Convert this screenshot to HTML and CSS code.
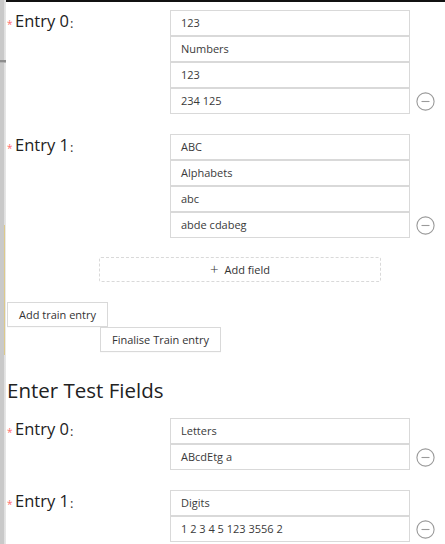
FILE: index.html
```html
<!DOCTYPE html>
<html>
<head>
<meta charset="utf-8">
<link rel="stylesheet" href="styles.css">
</head>
<body>
<div class="frame">
  <div class="side">
    <div class="s-top"></div>
    <div class="s-rule"></div>
    <div class="s-mid"></div>
    <div class="s-accent"></div>
    <div class="s-rest"></div>
  </div>
  <div class="main">
    <div class="list train">
      <div class="entry">
        <div class="label"><span class="req">*</span><span class="ltext">Entry 0</span><span class="colon">:</span></div>
        <div class="inputs">
          <div class="input">123</div>
          <div class="input">Numbers</div>
          <div class="input">123</div>
          <div class="input">234 125</div>
        </div>
        <div class="remove"><svg width="19" height="19" viewBox="0 0 19 19"><circle cx="9.5" cy="9.5" r="8.6" fill="none" stroke="#9a9a9a" stroke-width="1.1"/><line x1="5.5" y1="9.5" x2="13.5" y2="9.5" stroke="#9a9a9a" stroke-width="1.1"/></svg></div>
      </div>
      <div class="entry">
        <div class="label"><span class="req">*</span><span class="ltext">Entry 1</span><span class="colon">:</span></div>
        <div class="inputs">
          <div class="input">ABC</div>
          <div class="input">Alphabets</div>
          <div class="input">abc</div>
          <div class="input">abde cdabeg</div>
        </div>
        <div class="remove"><svg width="19" height="19" viewBox="0 0 19 19"><circle cx="9.5" cy="9.5" r="8.6" fill="none" stroke="#9a9a9a" stroke-width="1.1"/><line x1="5.5" y1="9.5" x2="13.5" y2="9.5" stroke="#9a9a9a" stroke-width="1.1"/></svg></div>
      </div>
    </div>
    <div class="add-field"><span class="plus">+</span><span>Add field</span></div>
    <div class="actions">
      <div class="btn">Add train entry</div>
      <div class="btn btn-final">Finalise Train entry</div>
    </div>
    <h2 class="heading">Enter Test Fields</h2>
    <div class="list test">
      <div class="entry">
        <div class="label"><span class="req">*</span><span class="ltext">Entry 0</span><span class="colon">:</span></div>
        <div class="inputs">
          <div class="input">Letters</div>
          <div class="input">ABcdEtg a</div>
        </div>
        <div class="remove"><svg width="19" height="19" viewBox="0 0 19 19"><circle cx="9.5" cy="9.5" r="8.6" fill="none" stroke="#9a9a9a" stroke-width="1.1"/><line x1="5.5" y1="9.5" x2="13.5" y2="9.5" stroke="#9a9a9a" stroke-width="1.1"/></svg></div>
      </div>
      <div class="entry">
        <div class="label"><span class="req">*</span><span class="ltext">Entry 1</span><span class="colon">:</span></div>
        <div class="inputs">
          <div class="input">Digits</div>
          <div class="input">1 2 3 4 5 123 3556 2</div>
        </div>
        <div class="remove"><svg width="19" height="19" viewBox="0 0 19 19"><circle cx="9.5" cy="9.5" r="8.6" fill="none" stroke="#9a9a9a" stroke-width="1.1"/><line x1="5.5" y1="9.5" x2="13.5" y2="9.5" stroke="#9a9a9a" stroke-width="1.1"/></svg></div>
      </div>
    </div>
  </div>
</div>
</body>
</html>
```

FILE: styles.css
```css
* { box-sizing: border-box; }
html, body { margin: 0; padding: 0; background: #fff; }
body { font-family: "Open Sans", "Noto Sans", sans-serif; color: #262626; }

.frame { display: flex; width: 445px; height: 544px; overflow: hidden; }

.side { width: 6px; display: flex; flex-direction: column; flex: none; }
.side > div { flex-shrink: 0; background: linear-gradient(to right, #c9c9c9 0, #c9c9c9 4px, #dedede 4px, #e8e8e8 6px); }
.s-top { height: 60px; }
.side > .s-rule { height: 3px; background: linear-gradient(to bottom, #8d8d8d 0, #8d8d8d 2px, #b5b5b5 2px); }
.s-mid { height: 162px; }
.side > .s-accent { height: 130px; background: linear-gradient(to right, #c9c9c9 0, #c9c9c9 4px, #dcc98a 4px, #dcc98a 5px, #e8e8e8 5px); }
.side > .s-rest { flex: 1 0 auto; }

.main { flex: 1; border-top: 2px solid #111; padding-left: 1px; display: flex; flex-direction: column; }
.main > * { flex-shrink: 0; }

.list.train { padding-top: 8px; }
.list.test { margin-top: 14px; }

.entry { display: flex; align-items: flex-start; margin-bottom: 20px; }
.label { width: 163px; height: 22px; display: flex; align-items: center; flex: none; }
.req { color: #ff6b6e; font-size: 10px; width: 8px; line-height: 1; margin-top: 5px; }
.ltext { font-size: 16.5px; color: #222; line-height: 22px; }
.colon { font-size: 13px; color: #333; margin-left: 1px; margin-top: 4px; }

.inputs { width: 240px; display: flex; flex-direction: column; flex: none; }
.input { height: 26px; border: 1px solid #d9d9d9; padding: 0 10px; font-size: 11px; line-height: 24px; color: #3a3a3a; background: #fff; }

.remove { align-self: flex-end; height: 26px; margin-left: 6px; display: flex; align-items: center; }
.remove svg { display: block; }

.add-field { margin-top: -1px; margin-left: 92px; width: 282px; height: 25px; border: 1px dashed #d9d9d9; border-radius: 2px; display: flex; align-items: center; justify-content: center; font-size: 11px; color: #333; }
.plus { font-size: 15px; margin-right: 6px; line-height: 1; font-weight: 300; }

.actions { margin-top: 20px; display: flex; flex-direction: column; align-items: flex-start; }
.btn { height: 25px; padding: 0 11px; border: 1px solid #d9d9d9; background: #fff; font-size: 11px; color: #333; line-height: 23px; box-shadow: 0 1px 0 rgba(0,0,0,0.02); }
.btn-final { margin-left: 93px; padding: 0 11px; }

.heading { margin: 24px 0 0 0; font-size: 20.5px; font-weight: 400; line-height: 28px; color: #222; }
```
